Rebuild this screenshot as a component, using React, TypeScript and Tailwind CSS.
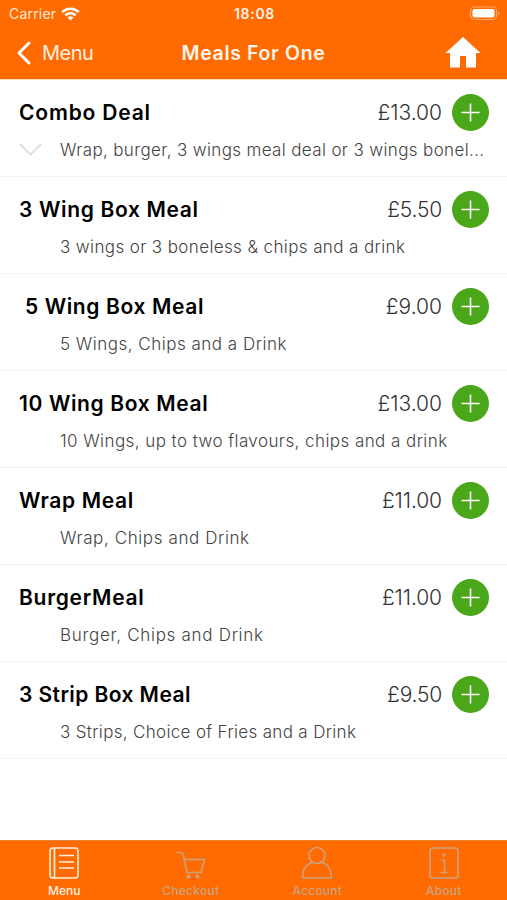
import { ReactNode } from "react";
import clsx from "clsx";

interface Meal {
  name: string;
  price: string;
  description: string;
  nameClass: string;
  priceClass: string;
  descriptionClass: string;
  expandable?: boolean;
}

const meals: Meal[] = [
  {
    name: "Combo Deal",
    price: "£13.00",
    description: "Wrap, burger, 3 wings meal deal or 3 wings bonel...",
    nameClass: "tracking-[0.82px]",
    priceClass: "tracking-[0px]",
    descriptionClass: "tracking-[0.36px]",
    expandable: true,
  },
  {
    name: "3 Wing Box Meal",
    price: "£5.50",
    description: "3 wings or 3 boneless & chips and a drink",
    nameClass: "tracking-[0.65px]",
    priceClass: "tracking-[-0.2px]",
    descriptionClass: "tracking-[0.38px]",
  },
  {
    name: " 5 Wing Box Meal",
    price: "£9.00",
    description: "5 Wings, Chips and a Drink",
    nameClass: "tracking-[0.63px]",
    priceClass: "tracking-[0px]",
    descriptionClass: "tracking-[0.5px]",
  },
  {
    name: "10 Wing Box Meal",
    price: "£13.00",
    description: "10 Wings, up to two flavours, chips and a drink",
    nameClass: "tracking-[0.63px]",
    priceClass: "tracking-[0px]",
    descriptionClass: "tracking-[0.43px]",
  },
  {
    name: "Wrap Meal",
    price: "£11.00",
    description: "Wrap, Chips and Drink",
    nameClass: "tracking-[0.68px]",
    priceClass: "tracking-[-0.1px]",
    descriptionClass: "tracking-[0.6px]",
  },
  {
    name: "BurgerMeal",
    price: "£11.00",
    description: "Burger, Chips and Drink",
    nameClass: "tracking-[0.72px]",
    priceClass: "tracking-[-0.1px]",
    descriptionClass: "tracking-[0.7px]",
  },
  {
    name: "3 Strip Box Meal",
    price: "£9.50",
    description: "3 Strips, Choice of Fries and a Drink",
    nameClass: "tracking-[0.42px]",
    priceClass: "tracking-[-0.2px]",
    descriptionClass: "tracking-[0.33px]",
  },
];

function StatusBar() {
  return (
    <div className="grid h-[27px] grid-cols-3 items-center pr-[7px] pl-[9px] text-[14px] leading-none">
      <div className="flex items-center gap-[5px] text-[#ffe9d6]">
        <span className="tracking-[0.2px]">Carrier</span>
        <svg width="19" height="14" viewBox="0 0 19 14" fill="none" stroke="#fff" strokeWidth="2.6">
          <path d="M1.2 5.2a11.8 11.8 0 0 1 16.6 0" />
          <path d="M4.3 8.3a7.4 7.4 0 0 1 10.4 0" />
          <path d="M9.5 13.5 6.6 10.6a4.1 4.1 0 0 1 5.8 0z" fill="#fff" stroke="none" />
        </svg>
      </div>
      <span className="text-center font-semibold tracking-[0.7px] text-[#fff4ea]">18:08</span>
      <svg className="justify-self-end" width="31" height="15" viewBox="0 0 31 15">
        <rect x="1.5" y="1" width="26" height="12.5" rx="4" fill="none" stroke="#ffa766" strokeWidth="1.2" />
        <rect x="3.5" y="3" width="22" height="8.5" rx="2.2" fill="#fff" />
        <path d="M29 5v4.5c1.8-.8 1.8-3.7 0-4.5z" fill="#ffa766" />
      </svg>
    </div>
  );
}

function NavBar() {
  return (
    <div className="grid h-[52px] grid-cols-[1fr_auto_1fr] items-center px-[16px]">
      <button className="flex items-center gap-[9px] text-[20px] text-[#fff0e2]">
        <svg width="17" height="26" viewBox="0 0 17 26" fill="none" stroke="#fff" strokeWidth="3" strokeLinecap="round" strokeLinejoin="round">
          <path d="M13 3 3 13l10 10" />
        </svg>
        <span className="tracking-[-0.5px]">Menu</span>
      </button>
      <h1 className="pt-[2px] text-[19.5px] font-semibold tracking-[0.65px] text-[#fff4ea]">Meals For One</h1>
      <svg className="mr-[10px] justify-self-end" width="36" height="32" viewBox="0 0 36 32" fill="#fff">
        <path d="M18 0 35.5 16H31V30.5H21V19H15V30.500H5V16H.5z" />
      </svg>
    </div>
  );
}

function MealRow({ meal }: { meal: Meal }) {
  return (
    <li className="h-[97px] border-b border-[#f3f3f3] pt-[14px] pr-[18px] pl-[19px]">
      <div className="flex h-[37px] items-center">
        <h2 className={clsx("flex-1 text-[21px] font-semibold whitespace-pre text-black", meal.nameClass)}>{meal.name}</h2>
        <span className={clsx("mr-[10px] text-[21px] font-light text-[#333]", meal.priceClass)}>{meal.price}</span>
        <button className="flex size-[37px] items-center justify-center rounded-full bg-[#4aa71a]">
          <svg width="19" height="19" viewBox="0 0 19 19" fill="none" stroke="#fff" strokeWidth="1.6">
            <path d="M9.5.5v18M.5 9.5h18" />
          </svg>
        </button>
      </div>
      <div className="mt-[6px] flex h-[25px] items-center">
        <div className="w-[41px] shrink-0">
          {meal.expandable && (
            <svg width="23" height="13" viewBox="0 0 23 13" fill="none" stroke="#dfdfdf" strokeWidth="2">
              <path d="m.7 1 10.8 10.5L22.3 1" />
            </svg>
          )}
        </div>
        <p className={clsx("pt-[2px] text-[17px] font-light whitespace-nowrap text-[#444]", meal.descriptionClass)}>{meal.description}</p>
      </div>
    </li>
  );
}

function TabItem({ label, active, className, children }: { label: string; active?: boolean; className: string; children: ReactNode }) {
  return (
    <button className={clsx("flex flex-col items-center pt-[5px]", active ? "text-[#fff0e0]" : "text-[#c9a27e]")}>
      <svg width="32" height="34" viewBox="0 0 32 34" fill="none" stroke="currentColor" strokeWidth="1.6">
        {children}
      </svg>
      <span className={clsx("mt-[4px] text-[12px] leading-[14px] font-medium", className)}>{label}</span>
    </button>
  );
}

function TabBar() {
  return (
    <nav className="grid h-[60px] grid-cols-4 border-t border-[#e8822f] bg-[#ff6b00] pl-px">
      <TabItem label="Menu" active className="tracking-[0px]">
        <rect x="2" y="2" width="28" height="30" rx="3" />
        <path d="M6.5 2v30M11 9.5h15M11 16h15M11 22h15" />
      </TabItem>
      <TabItem label="Checkout" className="tracking-[0.25px]">
        <path d="M1.5 6.5H6q1.500 0 2 1.500L12 26.500H26L29.500 13.500H9.500" />
        <circle cx="13.5" cy="30.5" r="1.2" fill="currentColor" />
        <circle cx="22.5" cy="30.5" r="1.2" fill="currentColor" />
      </TabItem>
      <TabItem label="Account" className="tracking-[0.2px]">
        <circle cx="16" cy="9.5" r="8" />
        <path d="M11.5 16.2C5 18 2 23 2 29v3h28v-3c0-6-3-11-9.500-12.800" />
      </TabItem>
      <TabItem label="About" className="tracking-[0.2px]">
        <rect x="2" y="2" width="28" height="30" rx="3" />
        <path d="M13 14h3.500v12.500M12.500 26.500h7" />
        <circle cx="16" cy="9" r="1" fill="currentColor" />
      </TabItem>
    </nav>
  );
}

export default function App() {
  return (
    <div className="flex h-[900px] w-[507px] flex-col overflow-hidden bg-white font-['Inter',sans-serif]">
      <header className="h-[80px] shrink-0 border-b border-[#ffdcb8] bg-[#ff6b00]">
        <StatusBar />
        <NavBar />
      </header>
      <ul className="flex-1">
        {meals.map((meal) => (
          <MealRow key={meal.name} meal={meal} />
        ))}
      </ul>
      <TabBar />
    </div>
  );
}
